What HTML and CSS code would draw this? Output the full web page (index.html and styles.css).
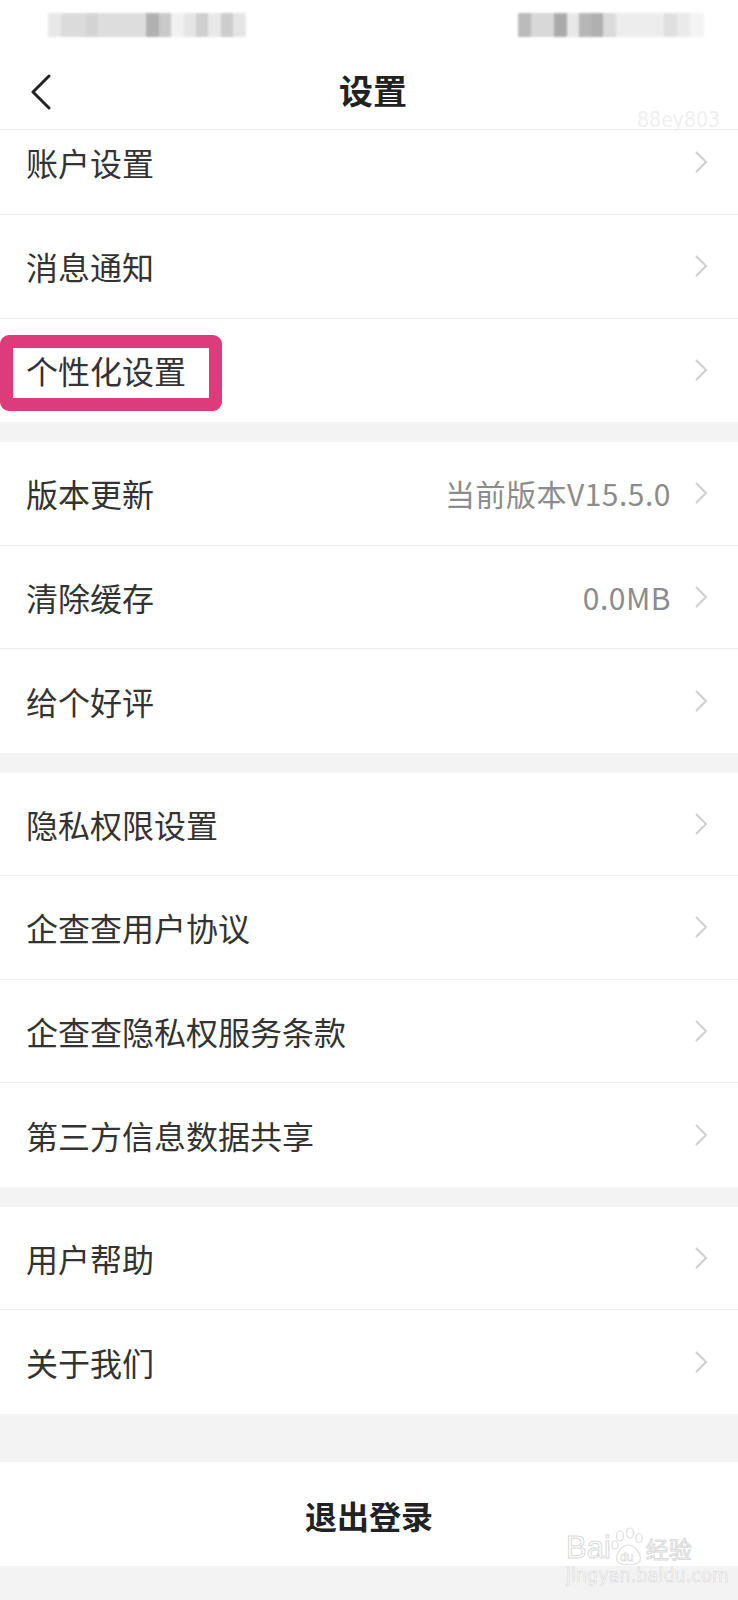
FILE: index.html
```html
<!DOCTYPE html>
<html lang="zh-CN">
<head>
    <meta charset="UTF-8">
    <meta name="viewport" content="width=device-width, initial-scale=1.0">
    <title>设置</title>
    <link rel="stylesheet" href="styles.css">
</head>
<body>
    <header class="header">
        <div class="status-bar">
            <div class="mosaic">
                <span class="tile" style="width:13px;background:#e6e6e6"></span>
                <span class="tile" style="width:25px;background:#d8d8d8"></span>
                <span class="tile" style="width:12px;background:#cfcfcf"></span>
                <span class="tile" style="width:48px;background:#dadada"></span>
                <span class="tile" style="width:13px;background:#a9a9a9"></span>
                <span class="tile" style="width:12px;background:#c4c4c4"></span>
                <span class="tile" style="width:13px;background:#f0f0f0"></span>
                <span class="tile" style="width:12px;background:#e2e2e2"></span>
                <span class="tile" style="width:12px;background:#cacaca"></span>
                <span class="tile" style="width:13px;background:#e6e6e6"></span>
                <span class="tile" style="width:12px;background:#c8c8c8"></span>
                <span class="tile" style="width:13px;background:#e3e3e3"></span>
            </div>
            <div class="mosaic">
                <span class="tile" style="width:13px;background:#b4b4b4"></span>
                <span class="tile" style="width:23px;background:#d4d4d4"></span>
                <span class="tile" style="width:13px;background:#a3a3a3"></span>
                <span class="tile" style="width:12px;background:#e6e6e6"></span>
                <span class="tile" style="width:12px;background:#b0b0b0"></span>
                <span class="tile" style="width:12px;background:#a8a8a8"></span>
                <span class="tile" style="width:13px;background:#d6d6d6"></span>
                <span class="tile" style="width:48px;background:#ececec"></span>
                <span class="tile" style="width:13px;background:#dcdcdc"></span>
                <span class="tile" style="width:13px;background:#e8e8e8"></span>
                <span class="tile" style="width:14px;background:#f2f2f2"></span>
            </div>
        </div>
        <div class="nav-bar">
            <svg class="back" width="24" height="36" viewBox="0 0 24 36">
                <polyline points="19,2 3,18 19,34" fill="none" stroke="#222" stroke-width="3" stroke-linecap="round" stroke-linejoin="round"/>
            </svg>
            <h1 class="title">设置</h1>
            <span class="user-mark">88ey803</span>
        </div>
    </header>

    <main>
        <section class="group">
            <div class="row row-cut">
                <span class="label">账户设置</span>
                <span class="trail"><svg class="chev" width="14" height="22" viewBox="0 0 14 22"><polyline points="2,1 12,11 2,21" fill="none" stroke="#cfcfcf" stroke-width="2"/></svg></span>
            </div>
            <div class="row">
                <span class="label">消息通知</span>
                <span class="trail"><svg class="chev" width="14" height="22" viewBox="0 0 14 22"><polyline points="2,1 12,11 2,21" fill="none" stroke="#cfcfcf" stroke-width="2"/></svg></span>
            </div>
            <div class="row">
                <span class="label">个性化设置</span>
                <span class="trail"><svg class="chev" width="14" height="22" viewBox="0 0 14 22"><polyline points="2,1 12,11 2,21" fill="none" stroke="#cfcfcf" stroke-width="2"/></svg></span>
                <span class="highlight"></span>
            </div>
        </section>

        <section class="group">
            <div class="row">
                <span class="label">版本更新</span>
                <span class="trail"><span class="value">当前版本V15.5.0</span><svg class="chev" width="14" height="22" viewBox="0 0 14 22"><polyline points="2,1 12,11 2,21" fill="none" stroke="#cfcfcf" stroke-width="2"/></svg></span>
            </div>
            <div class="row">
                <span class="label">清除缓存</span>
                <span class="trail"><span class="value">0.0MB</span><svg class="chev" width="14" height="22" viewBox="0 0 14 22"><polyline points="2,1 12,11 2,21" fill="none" stroke="#cfcfcf" stroke-width="2"/></svg></span>
            </div>
            <div class="row">
                <span class="label">给个好评</span>
                <span class="trail"><svg class="chev" width="14" height="22" viewBox="0 0 14 22"><polyline points="2,1 12,11 2,21" fill="none" stroke="#cfcfcf" stroke-width="2"/></svg></span>
            </div>
        </section>

        <section class="group">
            <div class="row">
                <span class="label">隐私权限设置</span>
                <span class="trail"><svg class="chev" width="14" height="22" viewBox="0 0 14 22"><polyline points="2,1 12,11 2,21" fill="none" stroke="#cfcfcf" stroke-width="2"/></svg></span>
            </div>
            <div class="row">
                <span class="label">企查查用户协议</span>
                <span class="trail"><svg class="chev" width="14" height="22" viewBox="0 0 14 22"><polyline points="2,1 12,11 2,21" fill="none" stroke="#cfcfcf" stroke-width="2"/></svg></span>
            </div>
            <div class="row">
                <span class="label">企查查隐私权服务条款</span>
                <span class="trail"><svg class="chev" width="14" height="22" viewBox="0 0 14 22"><polyline points="2,1 12,11 2,21" fill="none" stroke="#cfcfcf" stroke-width="2"/></svg></span>
            </div>
            <div class="row">
                <span class="label">第三方信息数据共享</span>
                <span class="trail"><svg class="chev" width="14" height="22" viewBox="0 0 14 22"><polyline points="2,1 12,11 2,21" fill="none" stroke="#cfcfcf" stroke-width="2"/></svg></span>
            </div>
        </section>

        <section class="group">
            <div class="row">
                <span class="label">用户帮助</span>
                <span class="trail"><svg class="chev" width="14" height="22" viewBox="0 0 14 22"><polyline points="2,1 12,11 2,21" fill="none" stroke="#cfcfcf" stroke-width="2"/></svg></span>
            </div>
            <div class="row">
                <span class="label">关于我们</span>
                <span class="trail"><svg class="chev" width="14" height="22" viewBox="0 0 14 22"><polyline points="2,1 12,11 2,21" fill="none" stroke="#cfcfcf" stroke-width="2"/></svg></span>
            </div>
        </section>

        <section class="logout">
            <span>退出登录</span>
            <div class="baidu-mark">
                <div class="baidu-logo">
                    <span>Bai</span>
                    <svg class="paw" width="34" height="40" viewBox="0 0 34 40">
                        <g fill="none" stroke="#dedede" stroke-width="1.2">
                            <ellipse cx="9" cy="9" rx="3.5" ry="5"/>
                            <ellipse cx="19" cy="6" rx="3.5" ry="5"/>
                            <ellipse cx="28" cy="11" rx="3.2" ry="4.5"/>
                            <ellipse cx="4" cy="18" rx="3" ry="4"/>
                            <path d="M6 34 C4 26 12 18 17 18 C23 18 31 26 29 34 C27 39 8 39 6 34 Z"/>
                        </g>
                        <text x="9" y="34" font-size="12" fill="#fff" stroke="#d8d8d8" stroke-width="0.6" font-family="Liberation Sans, sans-serif">du</text>
                    </svg>
                    <span class="baidu-cn">经验</span>
                </div>
                <div class="baidu-url">jingyan.baidu.com</div>
            </div>
        </section>
    </main>
</body>
</html>
```

FILE: styles.css
```css
html,
body {
    margin: 0;
    padding: 0;
}

body {
    background-color: #f3f3f3;
    font-family: "Noto Sans CJK SC", "Noto Sans", sans-serif;
    color: #333;
}

.header {
    background-color: #fff;
    height: 130px;
    border-bottom: 1px solid #ededed;
    box-sizing: border-box;
}

.status-bar {
    height: 50px;
    display: flex;
    justify-content: space-between;
    padding: 13px 34px 0 48px;
    box-sizing: border-box;
}

.mosaic {
    display: flex;
    height: 24px;
    filter: blur(1.2px);
    opacity: 0.9;
}

.tile {
    display: block;
    height: 100%;
}

.nav-bar {
    position: relative;
    height: 80px;
    display: flex;
    align-items: center;
    justify-content: center;
}

.back {
    position: absolute;
    left: 30px;
    top: 24px;
}

.title {
    margin: 0 0 0 8px;
    font-size: 34px;
    font-weight: bold;
    color: #222;
    line-height: 40px;
}

.user-mark {
    position: absolute;
    right: 18px;
    bottom: -2px;
    font-family: "Liberation Sans Narrow", "DejaVu Sans Condensed", sans-serif;
    font-size: 21px;
    color: #efefef;
}

.group {
    background-color: #fff;
}

.group + .group {
    margin-top: 20px;
}

.row {
    position: relative;
    height: 103.5px;
    box-sizing: border-box;
    display: flex;
    align-items: center;
    justify-content: space-between;
    padding: 0 30px 0 26px;
    border-bottom: 1px solid #ececec;
}

.row:last-child {
    border-bottom: none;
}

.row-cut {
    height: 85px;
    align-items: flex-end;
    padding-bottom: 34px;
}

.label {
    font-size: 32px;
    line-height: 36px;
    color: #333;
}

.trail {
    display: flex;
    align-items: center;
    height: 36px;
    gap: 23px;
}

.value {
    font-size: 30px;
    color: #8c8c8c;
    letter-spacing: 0.5px;
}

.chev {
    display: block;
}

.highlight {
    position: absolute;
    left: 0;
    top: 16px;
    width: 222px;
    height: 76px;
    box-sizing: border-box;
    border: 13px solid #dd3b7b;
    border-radius: 9px;
}

.logout {
    position: relative;
    margin-top: 48px;
    margin-bottom: 33px;
    height: 104px;
    background-color: #fff;
    display: flex;
    align-items: center;
    justify-content: center;
    font-size: 32px;
    font-weight: bold;
    color: #222;
}

.logout > span {
    margin-top: 2px;
}

.baidu-mark {
    position: absolute;
    left: 566px;
    top: 70px;
    width: 134px;
    font-weight: normal;
}

.baidu-logo {
    display: flex;
    align-items: flex-end;
    font-family: "Liberation Sans", sans-serif;
    font-size: 31px;
    line-height: 32px;
    color: #fff;
    -webkit-text-stroke: 1px #dadada;
}

.paw {
    margin-top: -18px;
    margin-bottom: -3px;
}

.baidu-cn {
    font-family: "Noto Sans CJK SC", sans-serif;
    font-size: 23px;
    line-height: 32px;
    margin-left: 1px;
}

.baidu-url {
    margin-top: 1px;
    font-family: "Liberation Sans Narrow", "DejaVu Sans Condensed", sans-serif;
    font-size: 19px;
    line-height: 20px;
    color: #fff;
    -webkit-text-stroke: 0.6px #d6d6d6;
    letter-spacing: 0.3px;
}
```
